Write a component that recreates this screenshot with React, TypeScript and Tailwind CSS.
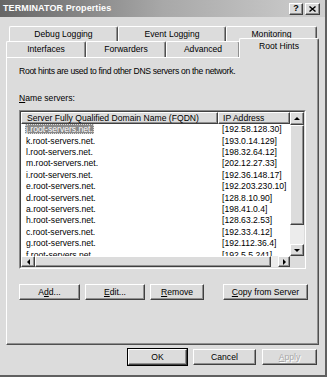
import React from "react";

const rows: [string, string][] = [
  ["j.root-servers.net.", "[192.58.128.30]"],
  ["k.root-servers.net.", "[193.0.14.129]"],
  ["l.root-servers.net.", "[198.32.64.12]"],
  ["m.root-servers.net.", "[202.12.27.33]"],
  ["i.root-servers.net.", "[192.36.148.17]"],
  ["e.root-servers.net.", "[192.203.230.10]"],
  ["d.root-servers.net.", "[128.8.10.90]"],
  ["a.root-servers.net.", "[198.41.0.4]"],
  ["h.root-servers.net.", "[128.63.2.53]"],
  ["c.root-servers.net.", "[192.33.4.12]"],
  ["g.root-servers.net.", "[192.112.36.4]"],
  ["f.root-servers.net.", "[192.5.5.241]"],
];

const raised =
  "border border-t-white border-l-white border-r-[#404040] border-b-[#404040] shadow-[inset_-1px_-1px_0_#909090]";

function Arrow({ dir }: { dir: "up" | "down" | "left" | "right" }) {
  const pts =
    dir === "up"
      ? "0,3 3,0 6,3"
      : dir === "down"
      ? "0,0 6,0 3,3"
      : dir === "left"
      ? "3,0 3,6 0,3"
      : "0,0 3,3 0,6";
  const w = dir === "up" || dir === "down" ? 6 : 3;
  const h = dir === "up" || dir === "down" ? 3 : 6;
  return (
    <svg width={w} height={h} viewBox={`0 0 ${w} ${h}`}>
      <polygon points={pts} fill="#000" />
    </svg>
  );
}

function Tab({ label, w, h = "h-[15px]" }: { label: string; w: string; h?: string }) {
  return (
    <div
      className={`${w} ${h} flex items-center justify-center border-t border-l border-r border-t-white border-l-white border-r-[#505050] rounded-t-[2px] shadow-[inset_-1px_0_0_#909090]`}
    >
      {label}
    </div>
  );
}

function Btn({
  children,
  w,
  def,
  disabled,
}: {
  children: React.ReactNode;
  w: string;
  def?: boolean;
  disabled?: boolean;
}) {
  return (
    <div
      className={`${w} h-[16px] flex items-center justify-center ${
        def ? "outline outline-1 outline-black" : ""
      } ${raised} ${disabled ? "text-[#a8a8a8] [text-shadow:1px_1px_0_#fff]" : ""}`}
    >
      {children}
    </div>
  );
}

export default function App() {
  return (
    <div className="w-[327px] h-[377px] bg-[#dcdcdc] overflow-hidden text-[8.6px] text-black font-['Liberation_Sans',Arial,sans-serif] border-r-2 border-b-2 border-r-[#606060] border-b-[#606060] flex flex-col">
      {/* title bar */}
      <div className="h-[17px] flex items-center pl-[3px] pr-[5px] bg-gradient-to-r from-[#666666] via-[#a8a8a8] to-[#cfcfcf] shrink-0">
        <span className="text-white font-bold text-[9px] tracking-[0.1px]">TERMINATOR Properties</span>
        <div className="ml-auto flex gap-[2px]">
          <div className={`w-[14px] h-[12px] flex items-center justify-center font-bold text-[9px] bg-[#dcdcdc] ${raised}`}>?</div>
          <div className={`w-[15px] h-[12px] flex items-center justify-center font-bold text-[9px] bg-[#dcdcdc] ${raised}`}>
            <svg width="7" height="6" viewBox="0 0 7 6">
              <path d="M0.5 0.5 L6.5 5.5 M6.5 0.5 L0.5 5.5" stroke="#000" strokeWidth="1.4" />
            </svg>
          </div>
        </div>
      </div>

      {/* tabs */}
      <div className="mt-[9px] ml-[9px] flex">
        <Tab label="Debug Logging" w="w-[109px]" />
        <Tab label="Event Logging" w="w-[108px]" />
        <Tab label="Monitoring" w="w-[91px]" />
      </div>
      <div className="ml-[6px] flex items-end h-[16px]">
        <Tab label="Interfaces" w="w-[80px]" h="h-[16px]" />
        <Tab label="Forwarders" w="w-[80px]" h="h-[16px]" />
        <Tab label="Advanced" w="w-[74px]" h="h-[16px]" />
        <div className="relative z-10 -mb-[1px] -ml-[1px] w-[80px] h-[20px] pb-[4px] bg-[#dcdcdc] flex items-center justify-center border-t border-l border-r border-t-white border-l-white border-r-[#505050] rounded-t-[2px] shadow-[inset_-1px_0_0_#909090]">
          Root Hints
        </div>
      </div>

      {/* panel */}
      <div className="ml-[6px] w-[313px] h-[288px] border border-t-white border-l-white border-r-[#505050] border-b-[#505050] shadow-[inset_-1px_-1px_0_#909090] flex flex-col pl-[12px]">
        <div className="mt-[8px] h-[11px] leading-[11px] tracking-[-0.3px]">
          Root hints are used to find other DNS servers on the network.
        </div>
        <div className="mt-[16px] h-[11px] leading-[11px]">
          <span className="underline">N</span>ame servers:
        </div>

        {/* listbox */}
        <div className="mt-[6px] w-[287px] h-[159px] border border-t-[#888888] border-l-[#888888] border-r-white border-b-white">
          <div className="w-full h-full border border-t-[#404040] border-l-[#404040] border-r-[#dcdcdc] border-b-[#dcdcdc] bg-white flex flex-col">
            <div className="flex flex-1 min-h-0">
              <div className="flex-1 flex flex-col overflow-hidden">
                <div className="flex h-[12px] shrink-0">
                  <div className={`w-[197px] bg-[#dcdcdc] ${raised} flex items-center pl-[5px] leading-none`}>
                    Server Fully Qualified Domain Name (FQDN)
                  </div>
                  <div className={`flex-1 bg-[#dcdcdc] ${raised} flex items-center pl-[4px] leading-none`}>
                    IP Address
                  </div>
                </div>
                <div className="flex flex-col">
                  {rows.map(([n, ip], i) => (
                    <div key={n} className="flex h-[11.4px] items-center shrink-0">
                      <div className="w-[197px] pl-[4px]">
                        <span
                          className={
                            i === 0
                              ? "bg-[#8a8a8a] text-white px-[1px] outline outline-1 outline-dotted outline-[#dddddd] -outline-offset-1"
                              : "px-[1px]"
                          }
                        >
                          {n}
                        </span>
                      </div>
                      <div className="pl-[4px] whitespace-nowrap">{ip}</div>
                    </div>
                  ))}
                </div>
              </div>
              {/* vertical scrollbar */}
              <div className="w-[14px] flex flex-col bg-[#ececec] shrink-0">
                <div className={`h-[13px] bg-[#dcdcdc] ${raised} flex items-center justify-center`}>
                  <Arrow dir="up" />
                </div>
                <div className={`h-[100px] bg-[#dcdcdc] ${raised}`} />
                <div className="flex-1" />
                <div className={`h-[12px] bg-[#dcdcdc] ${raised} flex items-center justify-center`}>
                  <Arrow dir="down" />
                </div>
              </div>
            </div>
            {/* horizontal scrollbar */}
            <div className="h-[11px] flex shrink-0 bg-[#ececec]">
              <div className={`w-[14px] bg-[#dcdcdc] ${raised} flex items-center justify-center`}>
                <Arrow dir="left" />
              </div>
              <div className={`w-[236px] bg-[#dcdcdc] ${raised}`} />
              <div className="flex-1" />
              <div className={`w-[12px] bg-[#dcdcdc] ${raised} flex items-center justify-center`}>
                <Arrow dir="right" />
              </div>
              <div className="w-[14px] bg-[#dcdcdc]" />
            </div>
          </div>
        </div>

        {/* buttons */}
        <div className="mt-[15px] flex">
          <Btn w="w-[61px]">
            <span>
              A<span className="underline">d</span>d...
            </span>
          </Btn>
          <div className="ml-[5px]">
            <Btn w="w-[60px]">
              <span>
                <span className="underline">E</span>dit...
              </span>
            </Btn>
          </div>
          <div className="ml-[5px]">
            <Btn w="w-[54px]">
              <span>
                <span className="underline">R</span>emove
              </span>
            </Btn>
          </div>
          <div className="ml-[19px]">
            <Btn w="w-[85px]">
              <span>
                <span className="underline">C</span>opy from Server
              </span>
            </Btn>
          </div>
        </div>
      </div>

      {/* bottom buttons */}
      <div className="mt-[4px] flex pl-[128px]">
        <Btn w="w-[59px]" def>
          OK
        </Btn>
        <div className="ml-[6px]">
          <Btn w="w-[63px]">Cancel</Btn>
        </div>
        <div className="ml-[6px]">
          <Btn w="w-[55px]" disabled>
            <span>
              <span className="underline">A</span>pply
            </span>
          </Btn>
        </div>
      </div>
    </div>
  );
}
